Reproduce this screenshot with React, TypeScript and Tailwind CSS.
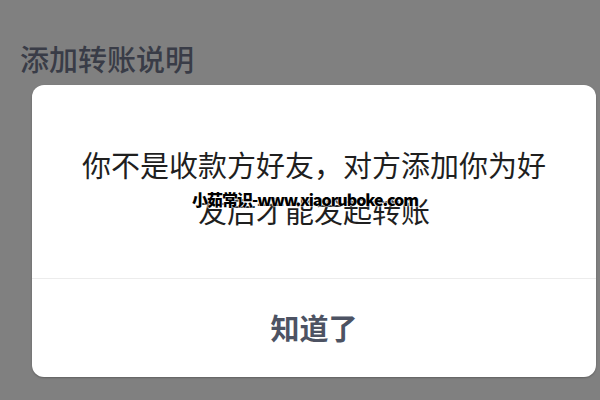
import React from 'react';

const cjk = "font-['Noto_Sans_CJK_SC','Noto_Sans',sans-serif]";

const TransferNoticeDialog: React.FC = () => {
    return (
        <div className="relative ml-[32px] mt-[7px] w-[564px] h-[292px] bg-white rounded-[12px] shadow-[0_1px_2px_rgba(0,0,0,0.25)]">
            <div className="h-[194px] border-b border-[#ececec] px-[44px] pt-[56px]">
                <p className="text-[29px] leading-[46px] text-center text-[#1f1f1f]">
                    你不是收款方好友，对方添加你为好友后才能发起转账
                </p>
            </div>
            <button className="w-full h-[97px] flex items-center justify-center text-[29px] font-bold text-[#4d5363]">
                知道了
            </button>
            {/* watermark stamped over the image */}
            <span className="absolute left-[160px] top-[104px] text-[16px] leading-[20px] font-black tracking-[-1px] text-black whitespace-nowrap [text-shadow:0_0_2px_#fff,0_0_2px_#fff,0_0_1px_#fff]">
                小茹常识-www.xiaoruboke.com
            </span>
        </div>
    );
};

const App: React.FC = () => {
    return (
        <div className={`w-[600px] h-[400px] overflow-hidden bg-[#808080] ${cjk}`}>
            <h1 className="mt-[38px] pl-[20px] h-[40px] text-[29px] leading-[40px] font-medium text-[#393c47]">添加转账说明</h1>
            <TransferNoticeDialog />
        </div>
    );
};

export default App;
